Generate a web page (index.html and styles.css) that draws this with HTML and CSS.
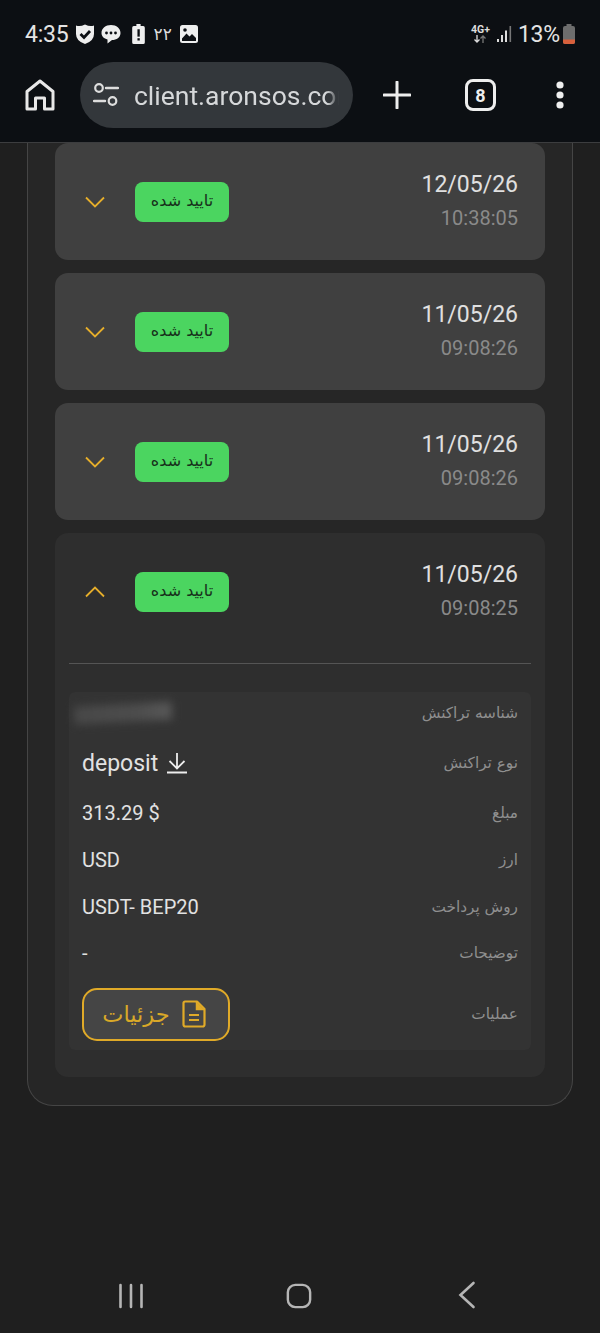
FILE: index.html
```html
<!DOCTYPE html>
<html lang="fa">
<head>
<meta charset="utf-8">
<title>client.aronsos.co</title>
<link rel="stylesheet" href="styles.css">
</head>
<body>
<div class="screen">
  <header class="chrome">
    <div class="status">
      <div class="status-group">
        <span class="clock">4:35</span>
        <svg class="s-icon" width="20" height="22" viewBox="0 0 20 22"><path d="M1 2.500 Q5 4 10 1.500 Q15 4 19 2.500 V11 Q19 18 10 21 Q1 18 1 11Z" fill="#eee"/><path d="M5.500 11 L9 14.500 L15 8" fill="none" stroke="#0c0f13" stroke-width="2.800"/></svg>
        <svg class="s-icon" width="20" height="20" viewBox="0 0 20 20"><path d="M10 1 C15.500 1 19.500 4.500 19.500 9 C19.500 13.500 15.500 16 11 16 L6.500 19.500 L6.500 15.500 C3 14.500 .5 12.500 .5 9 C.5 4.500 4.500 1 10 1Z" fill="#eee"/><circle cx="5.500" cy="9" r="1.400" fill="#0c0f13"/><circle cx="10" cy="9" r="1.400" fill="#0c0f13"/><circle cx="14.500" cy="9" r="1.400" fill="#0c0f13"/></svg>
        <svg class="s-icon s-gap" width="13" height="20" viewBox="0 0 12 19"><path d="M4 0h4v2h2.500a1.500 1.500 0 0 1 1.500 1.500v14a1.500 1.500 0 0 1-1.500 1.500h-9A1.500 1.500 0 0 1 0 17.500v-14A1.500 1.500 0 0 1 1.500 2H4Z" fill="#eee"/><rect x="5" y="5" width="2.200" height="7" fill="#0c0f13"/><rect x="5" y="13.500" width="2.200" height="2.200" fill="#0c0f13"/></svg>
        <span class="date-fa">۲۲</span>
        <svg class="s-icon" width="18" height="18" viewBox="0 0 18 18"><rect width="18" height="18" rx="2.500" fill="#eee"/><path d="M2 13.500 L6.500 8.500 L9.500 11.500 L12 9 L16 13 V16 H2Z" fill="#0c0f13"/><circle cx="5" cy="5" r="1.800" fill="#0c0f13"/></svg>
      </div>
      <div class="status-group status-right">
        <span class="net"><b>4G+</b><svg width="14" height="8" viewBox="0 0 14 8"><path d="M4 0V7M1.500 4.500 4 7 6.500 4.500" fill="none" stroke="#ddd" stroke-width="1.300"/><path d="M10 8V1M7.500 3.500 10 1 12.500 3.500" fill="none" stroke="#777" stroke-width="1.300"/></svg></span>
        <svg class="bars" width="15" height="18" viewBox="0 0 15 18"><rect x="0" y="14" width="2" height="3" fill="#ddd"/><rect x="4" y="10" width="2" height="7" fill="#ddd"/><rect x="8" y="5.500" width="2" height="11.500" fill="#ddd"/><rect x="12.500" y="1" width="1.600" height="16" fill="#777"/></svg>
        <span class="percent">13%</span>
        <svg class="batt" width="12" height="20" viewBox="0 0 12 20"><path d="M3.500 0h5v2H10a2 2 0 0 1 2 2v14a2 2 0 0 1-2 2H2a2 2 0 0 1-2-2V4a2 2 0 0 1 2-2h1.500Z" fill="#6d6d6d"/><path d="M0 15.500h12V18a2 2 0 0 1-2 2H2a2 2 0 0 1-2-2Z" fill="#d8603c"/></svg>
      </div>
    </div>
    <div class="toolbar">
      <svg class="home" width="30" height="32" viewBox="0 0 30 32"><path d="M2 30V12.500L15 2 28 12.500V30H19.500V19H10.500V30Z" fill="none" stroke="#e8e8e8" stroke-width="3" stroke-linejoin="round"/></svg>
      <div class="omnibox">
        <svg width="26" height="24" viewBox="0 0 26 24"><circle cx="6" cy="5" r="3.800" fill="none" stroke="#ddd" stroke-width="2.200"/><path d="M13 5H25" stroke="#ddd" stroke-width="2.400" stroke-linecap="round"/><circle cx="19.500" cy="18" r="3.800" fill="none" stroke="#ddd" stroke-width="2.200"/><path d="M1 18H12" stroke="#ddd" stroke-width="2.400" stroke-linecap="round"/></svg>
        <span class="url">client.aronsos.com</span>
      </div>
      <svg class="plus" width="28" height="28" viewBox="0 0 28 28"><path d="M14 1V27M1 14H27" stroke="#eee" stroke-width="3" stroke-linecap="round"/></svg>
      <div class="tabs">8</div>
      <svg class="more" width="10" height="30" viewBox="0 0 10 30"><circle cx="5" cy="5" r="3.600" fill="#eee"/><circle cx="5" cy="15" r="3.600" fill="#eee"/><circle cx="5" cy="25" r="3.600" fill="#eee"/></svg>
    </div>
  </header>

  <main class="page">
    <section class="panel">
      <article class="card">
        <div class="card-head">
          <div class="head-left">
            <svg class="chev" width="22" height="12" viewBox="0 0 22 12"><path d="M2 1.500 11 10.500 20 1.500" fill="none" stroke="#e6ae2b" stroke-width="1.800"/></svg>
            <span class="badge" dir="rtl">تایید شده</span>
          </div>
          <div class="stamp"><div class="date">12/05/26</div><div class="time">10:38:05</div></div>
        </div>
      </article>
      <article class="card">
        <div class="card-head">
          <div class="head-left">
            <svg class="chev" width="22" height="12" viewBox="0 0 22 12"><path d="M2 1.500 11 10.500 20 1.500" fill="none" stroke="#e6ae2b" stroke-width="1.800"/></svg>
            <span class="badge" dir="rtl">تایید شده</span>
          </div>
          <div class="stamp"><div class="date">11/05/26</div><div class="time">09:08:26</div></div>
        </div>
      </article>
      <article class="card">
        <div class="card-head">
          <div class="head-left">
            <svg class="chev" width="22" height="12" viewBox="0 0 22 12"><path d="M2 1.500 11 10.500 20 1.500" fill="none" stroke="#e6ae2b" stroke-width="1.800"/></svg>
            <span class="badge" dir="rtl">تایید شده</span>
          </div>
          <div class="stamp"><div class="date">11/05/26</div><div class="time">09:08:26</div></div>
        </div>
      </article>
      <article class="card card-open">
        <div class="card-head">
          <div class="head-left">
            <svg class="chev" width="22" height="12" viewBox="0 0 22 12"><path d="M2 10.500 11 1.500 20 10.500" fill="none" stroke="#e6ae2b" stroke-width="1.800"/></svg>
            <span class="badge" dir="rtl">تایید شده</span>
          </div>
          <div class="stamp"><div class="date">11/05/26</div><div class="time">09:08:25</div></div>
        </div>
        <div class="card-body">
          <div class="details">
            <div class="row row-id"><div class="smudge"></div><span class="label" dir="rtl">شناسه تراکنش</span></div>
            <div class="row row-type"><span class="value value-lg">deposit
              <svg width="22" height="22" viewBox="0 0 22 22"><path d="M11 1V16M3.500 9 11 16.500 18.500 9" fill="none" stroke="#eee" stroke-width="1.800"/><path d="M1 20.500H21" stroke="#eee" stroke-width="2"/></svg></span><span class="label" dir="rtl">نوع تراکنش</span></div>
            <div class="row row-amount"><span class="value">313.29 $</span><span class="label" dir="rtl">مبلغ</span></div>
            <div class="row"><span class="value">USD</span><span class="label" dir="rtl">ارز</span></div>
            <div class="row"><span class="value">USDT- BEP20</span><span class="label" dir="rtl">روش پرداخت</span></div>
            <div class="row row-desc"><span class="value">-</span><span class="label" dir="rtl">توضیحات</span></div>
            <div class="row row-action">
              <button class="detail-btn" type="button">
                <span dir="rtl">جزئیات</span>
                <svg width="24" height="28" viewBox="0 0 24 28"><path d="M3 1.500H15L22.500 9V24.500A2 2 0 0 1 20.500 26.500H3.500A2 2 0 0 1 1.500 24.500V3A1.500 1.500 0 0 1 3 1.500Z" fill="none" stroke="#e0aa28" stroke-width="2.200" stroke-linejoin="round"/><path d="M14.500 2V9.500H22" fill="#e0aa28" stroke="#e0aa28" stroke-width="1.500"/><path d="M7 15H17M7 20H17" stroke="#e0aa28" stroke-width="2.200"/></svg>
              </button>
              <span class="label" dir="rtl">عملیات</span>
            </div>
          </div>
        </div>
      </article>
    </section>
  </main>

  <nav class="navbar">
    <svg width="26" height="26" viewBox="0 0 26 26"><path d="M2.500 2V24M13 2V24M23.500 2V24" stroke="#b5b5b5" stroke-width="2.600" stroke-linecap="round"/></svg>
    <svg class="nav-home" width="26" height="26" viewBox="0 0 28 28"><rect x="2" y="2" width="24" height="24" rx="8" fill="none" stroke="#b5b5b5" stroke-width="2.600"/></svg>
    <svg width="18" height="28" viewBox="0 0 18 28"><path d="M15.500 2 2.500 14 15.500 26" fill="none" stroke="#b5b5b5" stroke-width="2.600" stroke-linecap="round"/></svg>
  </nav>
</div>
</body>
</html>
```
FILE: styles.css
```css
* { box-sizing: border-box; }
html, body { margin: 0; padding: 0; }
body {
  background: #1f1f1f;
  font-family: Roboto, "DejaVu Sans", sans-serif;
  color: #e6e6e6;
}
.screen {
  width: 600px;
  height: 1333px;
  display: flex;
  flex-direction: column;
  overflow: hidden;
}

/* browser chrome */
.chrome {
  height: 143px;
  flex: none;
  background: #0c0f13;
  border-bottom: 1px solid #3c3d3f;
}
.status {
  height: 62px;
  padding: 6px 25px 0 25px;
  display: flex;
  align-items: center;
  justify-content: space-between;
}
.status-group { display: flex; align-items: center; gap: 6px; }
.clock, .percent { font-size: 23px; color: #e4e4e4; letter-spacing: -.2px; }
.s-gap { margin: 0 3px 0 5px; }
.date-fa { font-size: 17px; line-height: 20px; font-family: "DejaVu Sans", sans-serif; margin-right: 2px; color: #ddd; }
.status-right { gap: 3px; }
.net {
  display: flex;
  flex-direction: column;
  align-items: center;
  line-height: 10px;
  margin-right: 4px;
}
.net b { font-size: 10.500px; font-weight: 700; color: #ddd; }
.bars { margin-right: 3px; }
.toolbar {
  height: 80px;
  display: flex;
  align-items: center;
  padding: 0 0 14px 25px;
}
.omnibox {
  width: 273px;
  height: 66px;
  margin-left: 25px;
  padding: 0 14px 0 13px;
  display: flex;
  align-items: center;
  gap: 15px;
  border-radius: 33px;
  background: #33373b;
  overflow: hidden;
}
.omnibox svg { flex: none; }
.url {
  font-size: 26.500px;
  color: #d6d8da;
  white-space: nowrap;
  overflow: hidden;
  flex: 1;
  -webkit-mask-image: linear-gradient(to right, #000 94%, transparent);
  mask-image: linear-gradient(to right, #000 94%, transparent);
}
.plus { margin-left: 30px; }
.tabs {
  width: 31px;
  height: 32px;
  margin-left: 54px;
  display: flex;
  align-items: center;
  justify-content: center;
  border: 3px solid #eee;
  border-radius: 8px;
  font-size: 18px;
  font-weight: 700;
  color: #eee;
}
.more { margin-left: 59px; }

/* page */
.page { flex: 1; }
.panel {
  margin: 0 27px;
  padding: 0 27px 28px;
  background: #262626;
  border: 1.500px solid #454545;
  border-top: 0;
  border-radius: 0 0 26px 26px;
  display: flex;
  flex-direction: column;
  gap: 13px;
}
.card {
  background: #404040;
  border-radius: 13px;
}
.card-open { background: #2e2e2e; }
.card-head {
  height: 117px;
  padding: 0 27px 0 29px;
  display: flex;
  align-items: center;
  justify-content: space-between;
}
.head-left { display: flex; align-items: center; gap: 29px; }
.badge {
  width: 94px;
  height: 40px;
  padding-bottom: 3px;
  display: flex;
  align-items: center;
  justify-content: center;
  background: #4bd560;
  border-radius: 8px;
  font-family: "DejaVu Sans", sans-serif;
  font-size: 16px;
  color: #17301b;
}
.stamp { text-align: right; padding-bottom: 2px; }
.date { font-size: 23px; line-height: 27px; color: #e0e0e0; }
.time { font-size: 20px; line-height: 24px; margin-top: 8px; color: #8a8a8a; }

/* details */
.card-body { padding: 13px 14px 27px; }
.details {
  border-top: 1px solid #555;
  padding: 28px 0 0;
}
.row {
  height: 47px;
  padding: 0 13px;
  background: #333;
  display: flex;
  align-items: center;
  justify-content: space-between;
}
.row-id { height: 46px; padding-bottom: 4px; border-radius: 6px 6px 0 0; }
.row-type { height: 50px; }
.row-amount { height: 48px; padding-top: 1px; }
.row-desc { height: 48px; padding-bottom: 2px; }
.row-action { height: 72px; border-radius: 0 0 6px 6px; }
.label {
  font-family: "DejaVu Sans", sans-serif;
  font-size: 15.300px;
  color: #8f8f8f;
}
.value { font-size: 20px; color: #e2e2e2; }
.value-lg {
  display: flex;
  align-items: center;
  gap: 8px;
  font-size: 23px;
}
.smudge {
  width: 98px;
  height: 18px;
  margin-left: -8px;
  background: linear-gradient(to right, #484848, #4d4d4d 65%, #555 90%);
  filter: blur(4px);
  transform: rotate(-3deg);
}
.detail-btn {
  width: 148px;
  height: 53px;
  padding: 0 4px 0 0;
  display: flex;
  align-items: center;
  justify-content: center;
  gap: 12px;
  background: #454545;
  border: 2px solid #e0aa28;
  border-radius: 15px;
  font-family: "DejaVu Sans", sans-serif;
  font-size: 22.500px;
  color: #d9a828;
}

/* android nav */
.navbar {
  height: 228px;
  flex: none;
  padding: 0 124px 25px 118px;
  display: flex;
  align-items: flex-end;
  justify-content: space-between;
}
.nav-home { margin-right: 4px; }
```
